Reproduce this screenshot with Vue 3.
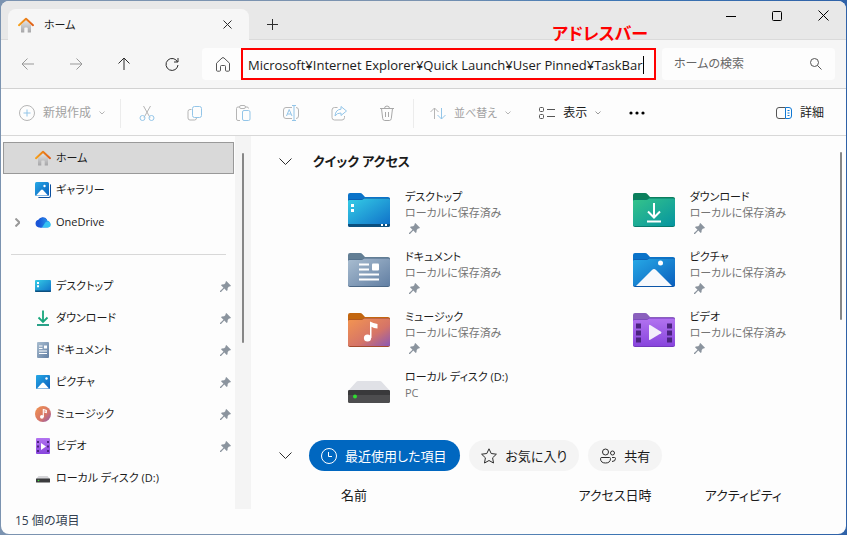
<script setup>
import { ref } from 'vue'

const address = ref('Microsoft¥Internet Explorer¥Quick Launch¥User Pinned¥TaskBar')
const query = ref('')

const house = '<path d="M3 8v7q0 .6.6.6H6.3v-4.400q0-.7.7-.7h2q.7 0 .7.7v4.400h2.700q.6 0 .6-.6V8L8 3.200z" fill="url(#g-wall)"/><path d="M1 8.200 8 1.800l7 6.400" fill="none" stroke="url(#g-roof)" stroke-width="2" stroke-linecap="round" stroke-linejoin="round"/>'

const small = {
  home: house,
  gallery: '<path d="M3 15h10.500q1.500 0 1.500-1.500V2q1 .3 1 1.500V14q0 2-2 2H4.500Q3.200 16 3 15z" fill="#0b4f9e"/><rect width="14" height="14" rx="1.500" fill="url(#g-pic)"/><path d="M1 13.500 6 8q1-1 2 0l5 5.500z" fill="#fff"/><circle cx="9.500" cy="4" r="1.200" fill="#fff"/>',
  onedrive: '<path d="M4 13.500a4 4 0 0 1-.6-7.800A5.200 5.200 0 0 1 12 5.500l-5 8z" fill="#1a55d8"/><path d="M3 7.500A5 5 0 0 1 12.300 6.500a3.600 3.600 0 0 1 .2 7H5z" fill="url(#g-cloud)"/><path d="m7 13.500 3.500-5.300q3-1.500 4.800.8 1.600 3.300-1.800 4.500z" fill="#35c2f2"/>',
  desktop: '<rect y="2" width="16" height="12" rx="1" fill="url(#g-desk)"/><path d="M0 12.500h16V13q0 1-1 1H1q-1 0-1-1z" fill="#0b4f7e"/><path d="M2 4h2v2H2zM2 7.200h2v2H2z" fill="#fff"/>',
  download: '<path d="M8 .5v11M3.500 7.500 8 12l4.500-4.500" fill="none" stroke="#17a67c" stroke-width="1.800"/><path d="M2 15h12" stroke="#12977c" stroke-width="1.800"/>',
  document: '<rect x="2" y="0" width="12" height="16" rx="1" fill="url(#g-doc)"/><path d="M4 4h3.500M4 6.500h3.500M4 9h8M4 11.500h8" stroke="#fff"/><path d="M9 3.500h3v3H9z" fill="#fff"/>',
  picture: '<rect x="1" y="1" width="14" height="14" rx="1" fill="url(#g-pic)"/><path d="M2 14.500 7 9q1-1 2 0l5 5.500z" fill="#fff"/><circle cx="11.500" cy="4.500" r="1.200" fill="#fff"/>',
  music: '<circle cx="8" cy="8" r="8" fill="url(#g-music)"/><circle cx="6.900" cy="10.800" r="1.900" fill="#fff"/><path d="M8.300 11V3.500l3 1v2l-2-.6" fill="none" stroke="#fff" stroke-width="1.100"/>',
  video: '<rect x="1" y="0" width="14" height="16" rx="1" fill="url(#g-video)"/><path d="M2 3h2v2H2zM2 7.500h2v2H2zM2 12h2v2H2zM12 3h2v2h-2zM12 7.500h2v2h-2zM12 12h2v2h-2z" fill="#4b2380"/><path d="m6 5 5 3.500L6 12z" fill="#fff"/>',
  disk: '<path d="M3.500 6h9L15 9H1z" fill="#d5d5d8"/><rect x="1" y="8.500" width="14" height="4" rx=".5" fill="#3c3c3e"/><circle cx="3.500" cy="10.500" r=".8" fill="#3be13b"/>'
}

function folder(tab, front, base, art) {
  return `<path d="M0 2q0-2 2-2h10q1.500 0 2.500 1.200L17 4h23q2 0 2 2v6H0z" fill="${tab}"/><path d="M0 7.500q0-1 1.500-1H13q1.500 0 2.500-1l.5-.5H40.500Q42 5 42 6.500V32q0 2-2 2H2q-2 0-2-2z" fill="${base}"/><path d="M0 8q0-1 1.500-1H13q1.500 0 2.500-1l.5-.5H40.500Q42 5.500 42 7V31.500q0 1.500-1.500 1.500h-39Q0 33 0 31.500z" fill="url(#${front})"/>${art}`
}

const large = {
  desktop: folder('#0a73c9', 'g-desk', '#0b4f9e', '<path d="M0 31h42v1q0 2-2 2H2q-2 0-2-2z" fill="#0b4f7e"/><path d="M3 11h3v3H3zM3 16h3v3H3zM33 31h2v2h-2zM37 31h2v2h-2z" fill="#fff"/>'),
  download: folder('#0b7f5c', 'g-down', '#087a6c', '<path d="M21 10v14M15 18.500l6 6 6-6M14 28.500h14" fill="none" stroke="#fff" stroke-width="2"/>'),
  document: folder('#627e94', 'g-doc', '#4b6785', '<path d="M11 11.500h10M11 16.500h10M11 21.500h20M11 26.500h20" stroke="#fff" stroke-width="2"/><rect x="24" y="10.500" width="7" height="7" rx="1" fill="#fff"/>'),
  picture: folder('#0a73c9', 'g-pic', '#0b55a8', '<path d="M3 33 19 17q2-2 4 0l16 16z" fill="#f7f9fc"/><circle cx="27.500" cy="10" r="2.500" fill="#fff"/>'),
  music: folder('#c2660f', 'g-music', '#a34a2c', '<circle cx="19.500" cy="25" r="3.600" fill="#fff"/><path d="M22 25V8.500q3 1.800 7.500 2.500v4.500q-4-.3-6-1.700V25z" fill="#fff"/>'),
  video: folder('#8a60bd', 'g-video', '#7239bd', '<path d="M3 10.500h5v5H3zM3 17.500h5v5H3zM3 24.500h5v5H3zM34 10.500h5v5h-5zM34 17.500h5v5h-5zM34 24.500h5v5h-5z" fill="#4b2380"/><path d="M16 12.500q0-1.200 1.200-.5L28 18.800q1 .7 0 1.400l-10.800 6.500q-1.200.7-1.200-.5z" fill="#f3eefb"/>'),
  disk: '<path d="M10 8h22q1 0 1.600.8L42 18H0l8.400-9.200Q9 8 10 8z" fill="#e0e1e6"/><rect y="17" width="42" height="13" rx="1.500" fill="#4d4d4f"/><path d="M0 18.500Q0 17 1.500 17h39q1.500 0 1.500 1.500V22H0z" fill="#39393b"/><circle cx="7" cy="23.500" r="2" fill="#2fdd2f"/>'
}

const tools = [
  { label: '切り取り', art: '<path d="M4.500 1 11 12.500M11.500 1 5 12.500" stroke="#b5b5b5"/><circle cx="3.500" cy="13" r="2.500"/><circle cx="12.500" cy="13" r="2.500"/>' },
  { label: 'コピー', art: '<path d="M4.500 4.500H3a2 2 0 0 0-2 2V13a2 2 0 0 0 2 2h4.500a2 2 0 0 0 2-2" stroke="#b5b5b5"/><rect x="5.500" y="1.500" width="9" height="11" rx="2"/>' },
  { label: '貼り付け', art: '<path d="M5 15.500H3q-1.500 0-1.500-1.500V3.500Q1.500 2 3 2h1.500M10.500 2H12q1.500 0 1.500 1.500" stroke="#b5b5b5"/><rect x="4.500" y=".5" width="6" height="3" rx="1.500" stroke="#b5b5b5"/><rect x="7.500" y="5.500" width="7.500" height="10" rx="1.500"/>' },
  { label: '名前の変更', art: '<path d="M9 2.500H3q-2.500 0-2.500 2.500v6q0 2.500 2.500 2.500h6M13 2.500q2.500 0 2.500 2.500v6q0 2.500-2.500 2.500" stroke="#b5b5b5"/><path d="m3.500 11 2.700-6.500L9 11M4.500 9H8M11 .5v15M9 .5h4M9 15.500h4"/>' },
  { label: '共有', art: '<path d="M6.500 2.500H3.500Q1 2.500 1 5v7.500Q1 15 3.500 15H11q2.500 0 2.500-2.500V11" stroke="#b5b5b5"/><path d="M10 1.500 15.500 6 10 10.500V8Q6 7.800 4 11 4.500 4.500 10 4.200z"/>' },
  { label: '削除', art: '<path d="M1 3.500h14M5.500 3.500q0-2.500 2.500-2.500t2.500 2.500M2.500 3.500l1.200 10q.2 2 2 2h4.600q1.800 0 2-2l1.200-10M6.500 7v5M9.500 7v5" stroke="#a8a8a8"/>' }
]

const places = [
  { icon: 'home', name: 'ホーム', active: true },
  { icon: 'gallery', name: 'ギャラリー' },
  { icon: 'onedrive', name: 'OneDrive', expandable: true }
]
const pinned = [
  { icon: 'desktop', name: 'デスクトップ', pin: true },
  { icon: 'download', name: 'ダウンロード', pin: true },
  { icon: 'document', name: 'ドキュメント', pin: true },
  { icon: 'picture', name: 'ピクチャ', pin: true },
  { icon: 'music', name: 'ミュージック', pin: true },
  { icon: 'video', name: 'ビデオ', pin: true },
  { icon: 'disk', name: 'ローカル ディスク (D:)' }
]
const groups = [places, pinned]

const saved = 'ローカルに保存済み'
const quick = [
  { icon: 'desktop', name: 'デスクトップ', sub: saved, pin: true },
  { icon: 'download', name: 'ダウンロード', sub: saved, pin: true },
  { icon: 'document', name: 'ドキュメント', sub: saved, pin: true },
  { icon: 'picture', name: 'ピクチャ', sub: saved, pin: true },
  { icon: 'music', name: 'ミュージック', sub: saved, pin: true },
  { icon: 'video', name: 'ビデオ', sub: saved, pin: true },
  { icon: 'disk', name: 'ローカル ディスク (D:)', sub: 'PC' }
]

const pinPath = 'M6.300 0 11 4.700 10 5.500H9L7.700 6.900 7.500 9.300 6.700 10 4.300 7.500 1 11H0V10L3.500 6.700 1 4.300 1.800 3.400 4.200 3.300 5.500 2V1z'
</script>

<template>
  <div class="desktop">
    <svg class="defs" aria-hidden="true">
      <defs>
        <linearGradient id="g-roof"><stop stop-color="#f6a11c" /><stop offset="1" stop-color="#e0601a" /></linearGradient>
        <linearGradient id="g-wall" x2="0" y2="1"><stop stop-color="#e4e4e4" /><stop offset="1" stop-color="#a5a5a7" /></linearGradient>
        <linearGradient id="g-desk" x2="1" y2="1"><stop stop-color="#35cde6" /><stop offset="1" stop-color="#0f6fc8" /></linearGradient>
        <linearGradient id="g-down" x2="1" y2="1"><stop stop-color="#35c48a" /><stop offset="1" stop-color="#0694a0" /></linearGradient>
        <linearGradient id="g-doc" x2="1" y2="1"><stop stop-color="#a9bdd0" /><stop offset="1" stop-color="#627fa3" /></linearGradient>
        <linearGradient id="g-pic" x2="1" y2="1"><stop stop-color="#27a9e6" /><stop offset="1" stop-color="#0a5fbd" /></linearGradient>
        <linearGradient id="g-music" x2="1" y2="1"><stop stop-color="#f39550" /><stop offset=".6" stop-color="#d57468" /><stop offset="1" stop-color="#8b58b5" /></linearGradient>
        <linearGradient id="g-video" x2="0" y2="1"><stop stop-color="#b273f0" /><stop offset="1" stop-color="#8845dd" /></linearGradient>
        <linearGradient id="g-cloud"><stop stop-color="#1650d6" /><stop offset="1" stop-color="#2ba5f0" /></linearGradient>
      </defs>
    </svg>

    <div class="window">
      <header class="titlebar">
        <div class="tab">
          <svg width="16" height="16" viewBox="0 0 16 16" v-html="house" />
          <span class="tab-name">ホーム</span>
          <button class="plain tab-close" aria-label="タブを閉じる">
            <svg width="9" height="9" viewBox="0 0 9 9"><path d="m.5.5 8 8m0-8-8 8" class="line" /></svg>
          </button>
        </div>
        <button class="plain new-tab" aria-label="新しいタブ">
          <svg width="11" height="11" viewBox="0 0 11 11"><path d="M5.500 0v11M0 5.500h11" class="line" /></svg>
        </button>
        <div class="controls">
          <button class="plain" aria-label="最小化"><svg width="10" height="10" viewBox="0 0 10 10"><path d="M0 5.500h10" class="line dark" /></svg></button>
          <button class="plain" aria-label="最大化"><svg width="10" height="10" viewBox="0 0 10 10"><rect x=".5" y=".5" width="9" height="9" rx="1" class="line dark" /></svg></button>
          <button class="plain" aria-label="閉じる"><svg width="11" height="11" viewBox="0 0 11 11"><path d="m.5.5 10 10m0-10-10 10" class="line dark" /></svg></button>
        </div>
      </header>

      <div class="navbar">
        <div class="nav-buttons">
          <button class="plain" aria-label="戻る"><svg width="14" height="14" viewBox="0 0 14 14"><path d="M13 7H1m5.500-5.500L1 7l5.500 5.500" class="line dim" /></svg></button>
          <button class="plain" aria-label="進む"><svg width="14" height="14" viewBox="0 0 14 14"><path d="M1 7h12M7.500 1.500 13 7l-5.500 5.500" class="line dim" /></svg></button>
          <button class="plain" aria-label="上へ"><svg width="14" height="14" viewBox="0 0 14 14"><path d="M7 13V1M1.500 6.500 7 1l5.500 5.500" class="line" /></svg></button>
          <button class="plain" aria-label="更新"><svg width="14" height="14" viewBox="0 0 14 14"><path d="M12.500 5A6 6 0 1 0 13 8M13 1v4H9" class="line" /></svg></button>
        </div>
        <div class="address">
          <button class="plain home" aria-label="ホーム">
            <svg width="16" height="16" viewBox="0 0 16 16"><path d="M1.500 7.200 7 2q1-.9 2 0l5.500 5.200v7q0 1-1 1h-2q-1 0-1-1V10.500q0-1-1-1h-3q-1 0-1 1v3.700q0 1-1 1h-2q-1 0-1-1z" class="line mid" /></svg>
          </button>
          <div class="address-box">
            <input v-model="address" aria-label="アドレス" spellcheck="false">
            <i class="caret"></i>
          </div>
          <strong class="callout">アドレスバー</strong>
        </div>
        <label class="search">
          <input v-model="query" placeholder="ホームの検索" aria-label="ホームの検索">
          <svg width="12" height="12" viewBox="0 0 12 12"><circle cx="4.500" cy="4.500" r="4" class="line mid" /><path d="m7.500 7.500 4 4" class="line mid" /></svg>
        </label>
      </div>

      <div class="toolbar">
        <button class="plain command off create">
          <svg width="16" height="16" viewBox="0 0 16 16"><circle cx="8" cy="8" r="7.500" class="line faint" /><path d="M8 4.500v7M4.500 8h7" class="line sky" /></svg>
          <span>新規作成</span>
          <svg width="6" height="4" viewBox="0 0 6 4"><path d="m.5.5 2.500 2.500L5.500.5" class="line faint" /></svg>
        </button>
        <span class="divider"></span>
        <div class="tool-group">
          <button v-for="t in tools" :key="t.label" class="plain" :aria-label="t.label">
            <svg class="line sky" width="16" height="16" viewBox="0 0 16 16" v-html="t.art" />
          </button>
        </div>
        <span class="divider"></span>
        <button class="plain command off sort">
          <svg width="16" height="13" viewBox="0 0 16 13"><path d="M4.500 12V1M.5 5l4-4 4 4" class="line faint" /><path d="M11.500 1v11m-4-4 4 4 4-4" class="line sky" /></svg>
          <span>並べ替え</span>
          <svg width="6" height="4" viewBox="0 0 6 4"><path d="m.5.5 2.500 2.500L5.500.5" class="line faint" /></svg>
        </button>
        <button class="plain command view">
          <svg width="16" height="12" viewBox="0 0 16 12"><rect x=".5" y=".5" width="4" height="4" rx="1" class="line mid" /><rect x=".5" y="7.500" width="4" height="4" rx="1" class="line mid" /><path d="M8 2.500h8M8 9.500h8" class="line mid" /></svg>
          <span>表示</span>
          <svg width="6" height="4" viewBox="0 0 6 4"><path d="m.5.5 2.500 2.500L5.500.5" class="line dim" /></svg>
        </button>
        <button class="plain more" aria-label="もっと見る">
          <svg width="16" height="4" viewBox="0 0 16 4"><circle cx="2" cy="2" r="1.600" /><circle cx="8" cy="2" r="1.600" /><circle cx="14" cy="2" r="1.600" /></svg>
        </button>
        <button class="plain command details">
          <svg width="16" height="12" viewBox="0 0 16 12"><path d="M9.500.5H3Q.5.5.5 3v6q0 2.500 2.500 2.500h6.500" class="line mid" /><path d="M9.500.5H13q2.500 0 2.500 2.500v6q0 2.500-2.500 2.500H9.500zM11.500 3.500h2M11.500 6h2M11.500 8.500h2" class="line blue" /></svg>
          <span>詳細</span>
        </button>
      </div>

      <div class="body">
        <aside class="sidebar">
          <nav class="tree">
            <ul v-for="(group, i) in groups" :key="i">
              <li v-for="p in group" :key="p.name">
                <a href="#" :class="{ active: p.active }" @click.prevent>
                  <span class="twist"><svg v-if="p.expandable" width="5" height="9" viewBox="0 0 5 9"><path d="m.5.500 4 4-4 4" class="line dim thick" /></svg></span>
                  <svg width="16" height="16" viewBox="0 0 16 16" v-html="small[p.icon]" />
                  <span class="place">{{ p.name }}</span>
                  <svg v-if="p.pin" class="pin" width="11" height="11" viewBox="0 0 11 11"><path :d="pinPath" /></svg>
                </a>
              </li>
            </ul>
          </nav>
          <div class="track"><i class="thumb"></i></div>
        </aside>

        <main class="content">
          <section>
            <div class="section-head">
              <button class="plain fold" aria-label="折りたたむ"><svg width="13" height="7" viewBox="0 0 13 7"><path d="m.5.5 6 6 6-6" class="line" /></svg></button>
              <h2>クイック アクセス</h2>
            </div>
            <ul class="quick">
              <li v-for="q in quick" :key="q.name">
                <svg class="folder" width="42" height="34" viewBox="0 0 42 34" v-html="large[q.icon]" />
                <div class="info">
                  <span>{{ q.name }}</span>
                  <span class="sub">{{ q.sub }}</span>
                  <svg v-if="q.pin" class="pin" width="11" height="11" viewBox="0 0 11 11"><path :d="pinPath" /></svg>
                </div>
              </li>
            </ul>
          </section>
          <section>
            <div class="section-head filters">
              <button class="plain fold" aria-label="折りたたむ"><svg width="13" height="7" viewBox="0 0 13 7"><path d="m.5.5 6 6 6-6" class="line" /></svg></button>
              <div class="pills">
                <button class="plain pill on">
                  <svg width="16" height="16" viewBox="0 0 16 16"><circle cx="8" cy="8" r="7.500" class="line white" /><path d="M7.500 4v4.500H11" class="line white" /></svg>
                  <span>最近使用した項目</span>
                </button>
                <button class="plain pill">
                  <svg width="16" height="16" viewBox="0 0 16 16"><path d="m8 .8 2.200 4.700 5.200.7-3.800 3.600.9 5.200L8 12.500 3.500 15l.9-5.200L.6 6.200l5.200-.7z" class="line" /></svg>
                  <span>お気に入り</span>
                </button>
                <button class="plain pill">
                  <svg width="16" height="16" viewBox="0 0 16 16"><circle cx="5.500" cy="4" r="3" class="line" /><circle cx="12.500" cy="5" r="2" class="line" /><path d="M2 9.500h7.500q1 0 1 1 0 4.500-5 4.500t-5-4.500q0-1 1.500-1zM12 9.500h2.500q1 0 1 1 0 3-3.500 3" class="line" /></svg>
                  <span>共有</span>
                </button>
              </div>
            </div>
            <table>
              <thead><tr><th scope="col" class="col-name">名前</th><th scope="col" class="col-date">アクセス日時</th><th scope="col">アクティビティ</th></tr></thead>
            </table>
          </section>
          <i class="thumb page-thumb"></i>
        </main>
      </div>

      <footer class="status">15 個の項目</footer>
    </div>
  </div>
</template>

<style>
body {
  margin: 0;
}
</style>

<style scoped>
* {
  box-sizing: border-box;
}
.desktop {
  display: flex;
  min-height: 100vh;
  padding: 1px;
  background: linear-gradient(90deg, #7b93b0 0%, #7b93b0 50%, #3f78b5 70%, #2f62a8 100%);
  color: #1b1b1b;
  font: 12px/16px "Open Sans", "Noto Sans CJK JP", sans-serif;
  font-feature-settings: "palt";
}
.defs {
  position: absolute;
  width: 0;
  height: 0;
}
.window {
  flex: 1;
  min-width: 0;
  display: flex;
  flex-direction: column;
  overflow: hidden;
  border-radius: 8px;
  background: #fdfdfd;
}
svg {
  display: block;
  flex: none;
}
ul {
  margin: 0;
  padding: 0;
  list-style: none;
}
.plain {
  display: flex;
  align-items: center;
  justify-content: center;
  padding: 0;
  border: 0;
  background: none;
  color: inherit;
  font: inherit;
  font-feature-settings: inherit;
  white-space: nowrap;
}
input {
  min-width: 0;
  padding: 0;
  border: 0;
  outline: 0;
  background: none;
  color: inherit;
  font: inherit;
  font-feature-settings: inherit;
}
.line {
  fill: none;
  stroke: #2c2c2c;
}
.dark { stroke: #000; }
.mid { stroke: #555; }
.dim { stroke: #999; }
.faint { stroke: #b5b5b5; }
.sky { stroke: #93c5e8; }
.blue { stroke: #0f78d4; }
.white { stroke: #fff; }
.thick { stroke-width: 2; }

.titlebar {
  display: flex;
  align-items: flex-end;
  height: 39px;
  padding-left: 7px;
  border-bottom: 1px solid #dadada;
  background: #e8e8e8;
}
.tab {
  display: flex;
  align-items: center;
  width: 241px;
  height: 31px;
  margin-bottom: -1px;
  padding: 0 14px 0 10px;
  border-radius: 8px 8px 0 0;
  background: #f6f6f6;
  font-size: 11px;
}
.tab-name {
  flex: 1;
  padding-left: 10px;
}
.tab-close {
  width: 16px;
  height: 16px;
}
.new-tab {
  width: 46px;
  height: 30px;
}
.controls {
  display: flex;
  align-self: flex-start;
  margin-left: auto;
}
.controls button {
  width: 46px;
  height: 29px;
}

.navbar {
  display: flex;
  align-items: center;
  height: 49px;
  padding: 0 11px 0 3px;
  border-bottom: 1px solid #d2d2d2;
  background: #f6f6f6;
}
.nav-buttons {
  display: flex;
  margin-right: 6px;
}
.nav-buttons button {
  width: 48px;
  height: 32px;
}
.address {
  position: relative;
  flex: 1;
  display: flex;
  min-width: 0;
  margin-right: 6px;
  border-radius: 4px 0 0 4px;
  background: #fdfdfd;
}
.home {
  width: 39px;
  height: 32px;
}
.home svg {
  margin-left: 3px;
}
.address-box {
  flex: 1;
  display: flex;
  align-items: center;
  min-width: 0;
  height: 32px;
  padding: 1px 10px 0 5px;
  border: 2px solid #f00;
  font-size: 13px;
}
.address-box input {
  flex: 1;
  height: 24px;
}
.caret {
  width: 1px;
  height: 18px;
  background: #000;
}
.callout {
  position: absolute;
  right: 8px;
  bottom: 36px;
  color: #f00;
  font-size: 17px;
  line-height: 20px;
}
.search {
  display: flex;
  align-items: center;
  width: 173px;
  height: 32px;
  padding: 0 13px 0 12px;
  border-radius: 4px;
  background: #fdfdfd;
  color: #666;
}
.search input {
  flex: 1;
}
.search input::placeholder {
  color: #666;
  opacity: 1;
}

.toolbar {
  display: flex;
  align-items: center;
  height: 47px;
  padding: 2px 22px 0 18px;
  border-bottom: 1px solid #d8d8d8;
}
.command {
  gap: 8px;
  height: 32px;
}
.off {
  color: #a2a2a2;
}
.create {
  margin-right: 15px;
}
.divider {
  width: 1px;
  height: 29px;
  background: #ececec;
}
.tool-group {
  display: flex;
  margin: 0 2px;
}
.tool-group button {
  width: 48px;
  height: 32px;
}
.sort {
  margin: 0 28px 0 16px;
  font-size: 11px;
}
.more {
  width: 32px;
  height: 32px;
  margin-left: 20px;
}
.details {
  margin-left: auto;
}

.body {
  flex: 1;
  display: flex;
}
.sidebar {
  display: flex;
  width: 250px;
}
.tree {
  flex: 1;
  padding: 6px 1px 14px 2px;
}
.tree a {
  display: flex;
  align-items: center;
  height: 32px;
  padding: 0 2px 0 7px;
  border: 1px solid transparent;
  color: inherit;
  font-size: 11px;
  text-decoration: none;
}
.tree .active {
  border-color: #999;
  background: #d9d9d9;
}
.tree ul + ul {
  margin: 16px 0 0;
  padding-top: 16px;
  background: linear-gradient(#d8d8d8, #d8d8d8) 8px 0 / calc(100% - 16px) 1px no-repeat;
}
.twist {
  width: 24px;
  padding-left: 4px;
}
.place {
  flex: 1;
  padding-left: 5px;
}
.pin {
  fill: #8b949e;
}
.track {
  display: flex;
  justify-content: center;
  width: 16px;
  padding-top: 17px;
  background: #f4f4f4;
}
.thumb {
  width: 2px;
  height: 190px;
  border-radius: 1px;
  background: #878787;
}
.content {
  position: relative;
  flex: 1;
  min-width: 0;
}
.page-thumb {
  position: absolute;
  top: 16px;
  right: 4px;
  height: 168px;
}
.section-head {
  display: flex;
  align-items: center;
  height: 50px;
  padding-left: 20px;
}
.fold {
  width: 28px;
  height: 28px;
}
h2 {
  margin: 0 0 0 14px;
  font-size: 13px;
  line-height: 20px;
}
.quick {
  display: grid;
  grid-template-columns: minmax(0, 4fr) minmax(0, 3fr);
  padding: 2px 0 0 97px;
}
.quick li {
  display: flex;
  gap: 15px;
  height: 60px;
}
.folder {
  margin-top: 5px;
}
.info {
  display: flex;
  flex-direction: column;
  padding-top: 1px;
  font-size: 11px;
}
.sub {
  color: #757575;
}
.info .pin {
  margin: 2px 0 0 4px;
}
.filters {
  height: 34px;
  margin-top: 12px;
  padding-bottom: 3px;
}
.pills {
  display: flex;
  gap: 9px;
  margin-left: 10px;
}
.pill {
  gap: 8px;
  height: 31px;
  padding: 0 12px;
  border-radius: 16px;
  background: #f4f4f4;
  font-size: 13px;
}
.on {
  padding: 0 14px 0 12px;
  background: #0067c0;
  color: #fff;
}
table {
  width: 100%;
  padding-left: 90px;
  border-spacing: 0;
  table-layout: fixed;
}
th {
  padding: 13px 0 6px;
  font-size: 13px;
  font-weight: 400;
  text-align: left;
}
.col-name { width: 47%; }
.col-date { width: 25%; }
.status {
  height: 25px;
  padding: 4px 14px;
  color: #333f50;
}
</style>
